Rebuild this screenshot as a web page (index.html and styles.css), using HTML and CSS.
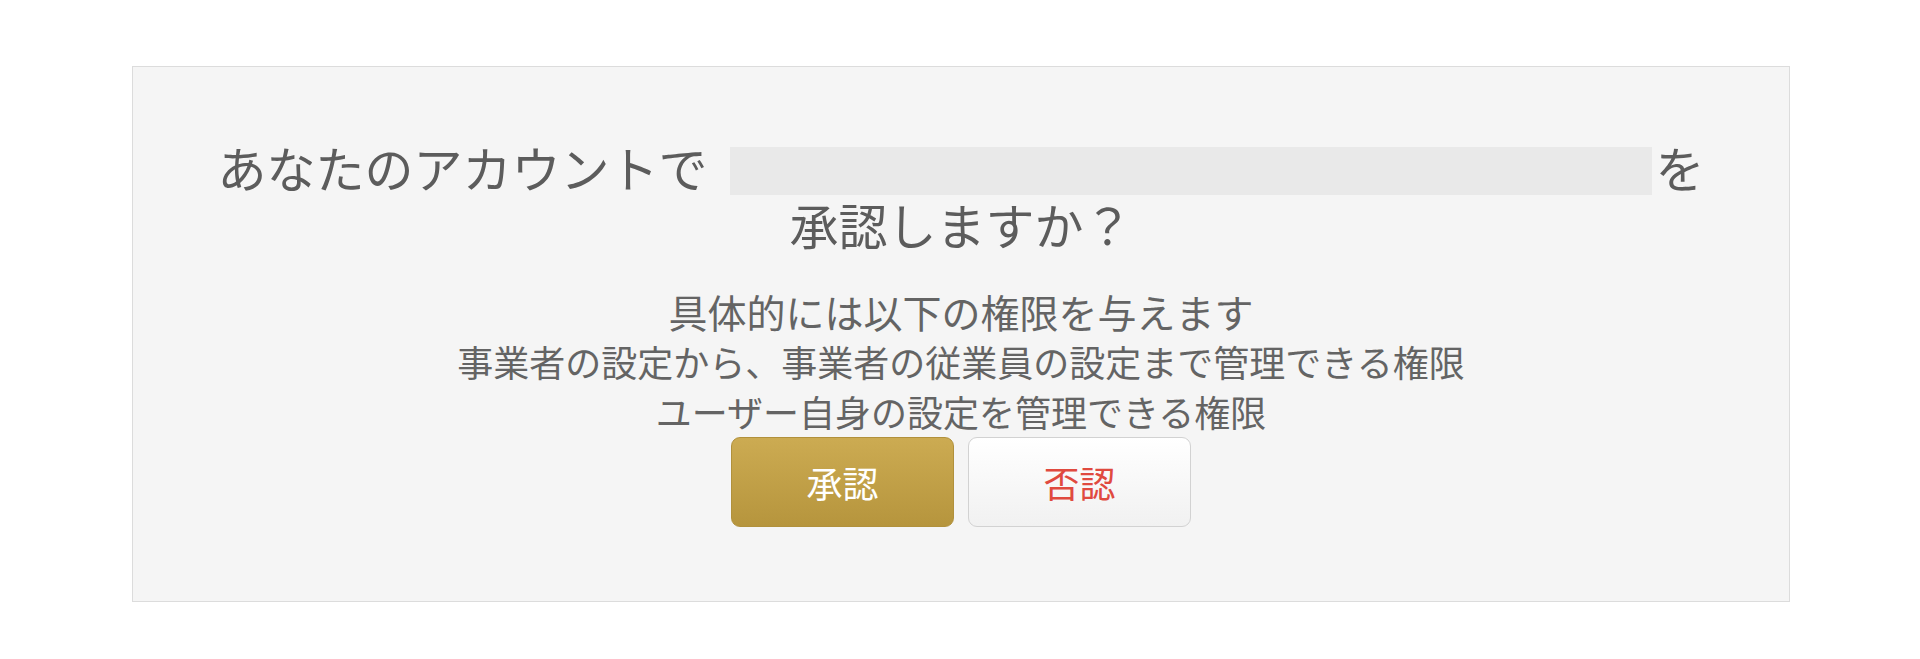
FILE: index.html
```html
<!DOCTYPE html>
<html lang="ja">
<head>
<meta charset="utf-8">
<title>承認</title>
<link rel="stylesheet" href="styles.css">
</head>
<body>
<div class="page">
  <div class="card">
    <h1 class="title">あなたのアカウントで<span class="redacted"></span>を承認しますか？</h1>
    <div class="desc">
      <div class="desc-lead">具体的には以下の権限を与えます</div>
      <div class="desc-item">事業者の設定から、事業者の従業員の設定まで管理できる権限</div>
      <div class="desc-item">ユーザー自身の設定を管理できる権限</div>
    </div>
    <div class="actions">
      <button class="btn btn-approve" type="button">承認</button>
      <button class="btn btn-deny" type="button">否認</button>
    </div>
  </div>
</div>
</body>
</html>
```

FILE: styles.css
```css
html, body {
  margin: 0;
  padding: 0;
  background: #ffffff;
}

body {
  font-family: "Noto Sans CJK JP", "Noto Sans", sans-serif;
  color: #646464;
}

.page {
  padding: 66px 0 0 132px;
}

.card {
  width: 1656px;
  border: 1px solid #dcdcdc;
  background: #f5f5f5;
  padding: 71px 0 74px;
  text-align: center;
}

.title {
  margin: 0;
  padding: 0 73px;
  font-size: 49px;
  line-height: 57px;
  font-weight: normal;
  color: #5c5c5c;
}

.redacted {
  display: inline-block;
  width: 922px;
  height: 48px;
  margin-left: 22px;
  margin-right: 4px;
  background: #e9e9e9;
  vertical-align: -7px;
}

.desc {
  margin-top: 34px;
  color: #646464;
}

.desc-lead {
  font-size: 39px;
  line-height: 50px;
}

.desc-item {
  font-size: 36px;
  line-height: 50px;
}

.actions {
  margin-top: 1px;
  display: flex;
  justify-content: center;
  gap: 14px;
}

.btn {
  box-sizing: border-box;
  width: 223px;
  height: 90px;
  border-radius: 9px;
  font-family: "Noto Sans CJK JP", "Noto Sans", sans-serif;
  font-size: 36px;
  padding: 0;
  display: flex;
  align-items: center;
  justify-content: center;
  cursor: pointer;
}

.btn-approve {
  border: 1px solid #b1913c;
  background: linear-gradient(#ccab52, #b6953d);
  color: #ffffff;
}

.btn-deny {
  border: 1px solid #d2d2d2;
  background: linear-gradient(#ffffff, #f1f1f1);
  color: #e04a3f;
}
```
